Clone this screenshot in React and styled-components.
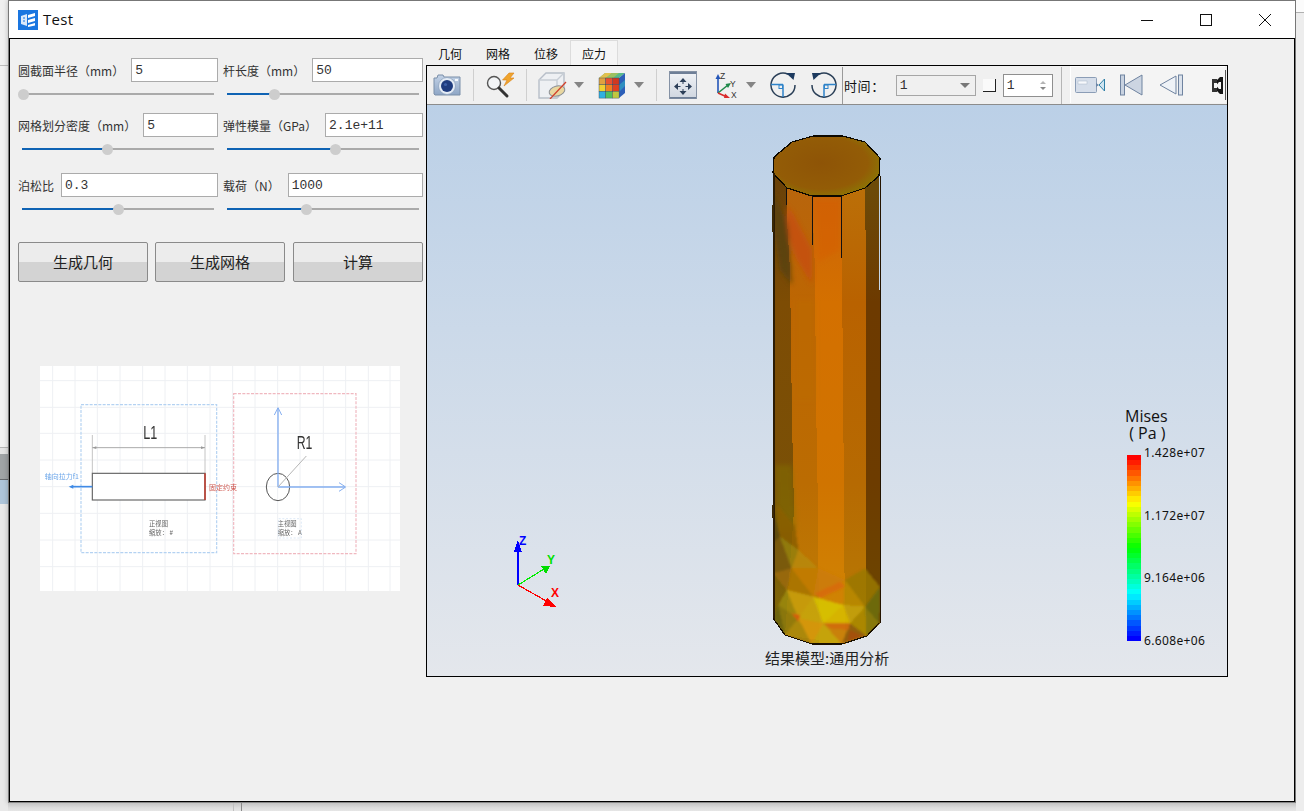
import React from 'react';
import styled, { createGlobalStyle } from 'styled-components';

const GlobalStyle = createGlobalStyle`
  html, body {
    margin: 0;
    padding: 0;
    background: #f0f0f0;
    overflow: hidden;
  }
  * { box-sizing: border-box; }
`;

const CJK = `"Noto Sans CJK SC", "Noto Sans", sans-serif`;

const Desktop = styled.div`
  width: 1304px;
  height: 811px;
  display: grid;
  grid-template-columns: 8px 1288px 8px;
  grid-template-rows: 803px 8px;
  background: #f0f0f0;
`;

const LeftStrip = styled.div`
  grid-row: 1 / 3;
  display: flex;
  flex-direction: column;
`;

const StripPart = styled.div`
  height: ${(p) => p.$h}px;
  flex: ${(p) => (p.$h ? 'none' : 1)};
  background: ${(p) => p.$c};
`;

const RightStrip = styled.div`
  grid-row: 1 / 3;
  grid-column: 3;
  display: flex;
  flex-direction: column;
`;

const BottomStrip = styled.div`
  grid-row: 2;
  grid-column: 2;
  display: flex;
  background: linear-gradient(#c4c4c4, #dedede 60%, #e6e6e6);
`;

const BottomLine = styled.div`
  width: 1px;
  margin-left: ${(p) => p.$ml}px;
  background: ${(p) => p.$c};
`;

const Win = styled.div`
  grid-row: 1;
  grid-column: 2;
  border: 1px solid #777;
  border-bottom-color: #888;
  background: #fff;
  display: flex;
  flex-direction: column;
  box-shadow: 0 0 5px rgba(0, 0, 0, 0.25);
`;

const TitleBar = styled.div`
  height: 37px;
  display: flex;
  align-items: center;
  padding-left: 9px;
`;

const TitleText = styled.span`
  margin-left: 5px;
  margin-top: -1px;
  font: 15px "Open Sans", "Noto Sans", sans-serif;
  letter-spacing: 0.3px;
  color: #111;
`;

const WinButtons = styled.div`
  margin-left: auto;
  display: flex;
  margin-right: 1px;
`;

const WinButton = styled.div`
  width: 58.7px;
  height: 37px;
  display: flex;
  align-items: center;
  justify-content: center;
`;

const Client = styled.div`
  flex: 1;
  display: flex;
  align-items: flex-start;
  background: #f0f0f0;
  border: 1px solid #000;
`;

const FormPanel = styled.div`
  width: 416px;
  padding: 19px 3px 0 8px;
`;

const FormRow = styled.div`
  display: grid;
  grid-template-columns: 200px 200px;
  column-gap: 5px;
  margin-bottom: ${(p) => p.$gap}px;
`;

const Cell = styled.div`
  display: flex;
  flex-direction: column;
`;

const FieldLine = styled.div`
  display: flex;
  align-items: center;
  height: 24px;
`;

const Label = styled.label`
  font: 12px ${CJK};
  color: #333;
  white-space: nowrap;
  margin-right: ${(p) => p.$mr}px;
`;

const TextBox = styled.div`
  flex: 1;
  height: 24px;
  background: #fff;
  border: 1px solid #ababab;
  padding-left: 3px;
  font: 13px/24px "Liberation Mono", monospace;
  color: #333;
`;

const SliderWrap = styled.div`
  position: relative;
  height: 16px;
  margin: 4px 4px 0 4px;
  display: flex;
  align-items: center;
  background: linear-gradient(#aaa, #aaa) center / 100% 2px no-repeat;
`;

const SliderFill = styled.div`
  height: 2px;
  width: ${(p) => p.$pos}px;
  background: #0f63b4;
`;

const SliderKnob = styled.div`
  position: absolute;
  top: 2.5px;
  left: ${(p) => p.$pos - 5.5}px;
  width: 11px;
  height: 11px;
  border-radius: 50%;
  background: #cdcdcd;
`;

const ButtonRow = styled.div`
  display: flex;
  gap: 7px;
`;

const ActionButton = styled.button`
  width: 130px;
  height: 40px;
  padding: 0 0 2px;
  border: 1px solid #8a8a8a;
  border-radius: 2px;
  background: linear-gradient(#ececec 50%, #d3d3d3 50%);
  font: 15px ${CJK};
  color: #222;
  &:last-child { margin-left: 1px; }
`;

const Sketch = styled.div`
  width: 360px;
  height: 225px;
  margin: 84px 0 0 22px;
  background: #fff;
  filter: blur(0.5px);
`;

const SketchSvg = styled.svg`
  display: block;
`;

const ResultColumn = styled.div`
  width: 802px;
  display: flex;
  flex-direction: column;
  margin-top: 1px;
`;

const TabBar = styled.div`
  height: 25px;
  display: flex;
`;

const Tab = styled.div`
  width: 48px;
  height: 25px;
  text-align: center;
  font: 12px/27px ${CJK};
  color: #111;
  ${(p) => p.$active && 'background: #f5f5f5; border: 1px solid #dcdcdc; border-bottom: 0; line-height: 25px;'}
`;

const Viewer = styled.div`
  height: 612px;
  border: 1px solid #000;
  display: flex;
  flex-direction: column;
`;

const Toolbar = styled.div`
  height: 39px;
  flex: none;
  display: flex;
  align-items: center;
  background: #f0f0f0;
  border-bottom: 1px solid #8c8c8c;
`;

const Tool = styled.div`
  flex: none;
  display: flex;
  margin-left: ${(p) => p.$ml || 0}px;
`;

const ToolSep = styled.div`
  flex: none;
  width: 1px;
  height: ${(p) => p.$h || 32}px;
  margin-left: ${(p) => p.$ml}px;
  background: ${(p) => p.$c || '#cfcfcf'};
`;

const Caret = styled.div`
  flex: none;
  margin-left: ${(p) => p.$ml}px;
  width: 0;
  height: 0;
  border-left: 5px solid transparent;
  border-right: 5px solid transparent;
  border-top: 6px solid #858585;
`;

const TimeLabel = styled.span`
  margin-left: 1px;
  font: 13px ${CJK};
  color: #111;
  letter-spacing: 0.6px;
  white-space: nowrap;
`;

const Combo = styled.div`
  flex: none;
  width: 80px;
  height: 21px;
  margin-left: 11px;
  border: 1px solid #a6a6a6;
  display: flex;
  align-items: center;
  justify-content: space-between;
  padding: 0 5px 0 3px;
  font: 13px "Liberation Mono", monospace;
  color: #333;
`;

const ComboCaret = styled.div`
  width: 0;
  height: 0;
  border-left: 5px solid transparent;
  border-right: 5px solid transparent;
  border-top: 5px solid #777;
`;

const ToggleBox = styled.div`
  flex: none;
  width: 13px;
  height: 13px;
  margin: 1px 0 0 7px;
  background: #fafafa;
  border-right: 1px solid #222;
  border-bottom: 1px solid #222;
`;

const Spin = styled.div`
  flex: none;
  width: 50px;
  height: 23px;
  margin-left: 7px;
  background: #fff;
  border: 1px solid #8f8f8f;
  display: flex;
  align-items: center;
  justify-content: space-between;
  padding: 0 6px 0 3px;
  font: 13px "Liberation Mono", monospace;
  color: #333;
`;

const SpinArrows = styled.div`
  display: flex;
  flex-direction: column;
  gap: 3px;
`;

const SpinArrow = styled.div`
  width: 0;
  height: 0;
  border-left: 3px solid transparent;
  border-right: 3px solid transparent;
  ${(p) => (p.$up ? 'border-bottom: 3px solid #b5b5b5;' : 'border-top: 3px solid #888;')}
`;

const PlayGroup = styled.div`
  flex: none;
  height: 37px;
  width: 155px;
  margin: 0 0 1px 8px;
  display: flex;
  align-items: center;
  background: #f4f4f4;
  border-top: 1px solid #fff;
  border-left: 1px solid #fff;
`;

const EdgeLine = styled.div`
  flex: none;
  width: 1px;
  height: 30px;
  background: #555;
`;

const Viewport = styled.div`
  position: relative;
  flex: 1;
  background: linear-gradient(#bbd0e7, #e4e7ec);
  overflow: hidden;
`;

const SceneSvg = styled.svg`
  position: absolute;
  left: 0;
  top: 0;
`;

const LegendTitle = styled.div`
  position: absolute;
  left: 698px;
  top: 303px;
  font: 16px/17px "Open Sans", "Noto Sans", sans-serif;
  color: #111;
  white-space: pre;
`;

const ColorBar = styled.div`
  position: absolute;
  left: 700px;
  top: 350px;
  width: 14px;
  height: 186px;
`;

const LegendValue = styled.div`
  position: absolute;
  left: 717px;
  top: ${(p) => p.$top}px;
  font: 12px/14px "Noto Sans", sans-serif;
  letter-spacing: 0.35px;
  color: #111;
`;

const ModelCaption = styled.div`
  position: absolute;
  left: 338px;
  top: 542px;
  font: 15px/22px ${CJK};
  color: #222;
  white-space: nowrap;
`;

// banded jet colour map for the legend, top (red) to bottom (blue)
const jet = (t) => {
  const stops = [
    [255, 0, 0],
    [255, 255, 0],
    [0, 255, 0],
    [0, 255, 255],
    [0, 0, 255],
  ];
  const s = Math.min(t * 4, 3.999);
  const i = Math.floor(s);
  const f = s - i;
  const c = stops[i].map((v, k) => Math.round(v + (stops[i + 1][k] - v) * f));
  return `rgb(${c.join(',')})`;
};

const BANDS = 36;
const barGradient = `linear-gradient(${Array.from({ length: BANDS }, (_, i) => {
  const a = ((i / BANDS) * 100).toFixed(2);
  const b = (((i + 1) / BANDS) * 100).toFixed(2);
  return `${jet(i / (BANDS - 1))} ${a}% ${b}%`;
}).join(',')})`;

const WindowLogo = () => (
  <svg width="20" height="20" viewBox="0 0 20 20">
    <rect width="20" height="20" fill="#1a76e0" />
    <path d="M3 6 L9 4 V16 L3 14 Z" fill="#dbe9fa" />
    <path d="M5 8h2M5 11h2" stroke="#1a76e0" strokeWidth="1.2" />
    <path d="M10 5 L17 3 V6 L10 8 Z M10 10 L17 8 V11 L10 13 Z M10 15 L17 13 V15.5 L10 17 Z" fill="#fff" />
  </svg>
);

const MinIcon = () => (
  <svg width="12" height="12" viewBox="0 0 12 12"><path d="M0 6.5H12" stroke="#111" fill="none" /></svg>
);
const MaxIcon = () => (
  <svg width="12" height="12" viewBox="0 0 12 12"><rect x="0.5" y="0.5" width="11" height="11" stroke="#111" fill="none" /></svg>
);
const CloseIcon = () => (
  <svg width="12" height="12" viewBox="0 0 12 12"><path d="M0 0L12 12M12 0L0 12" stroke="#111" fill="none" /></svg>
);

const CameraIcon = () => (
  <svg width="28" height="24" viewBox="0 0 28 24">
    <defs>
      <linearGradient id="camBody" x1="0" y1="0" x2="0" y2="1">
        <stop offset="0" stopColor="#c3d2e6" />
        <stop offset="1" stopColor="#8ea6c6" />
      </linearGradient>
    </defs>
    <path d="M1 5 H4 L5 2 H10 L11 4 H27 V22 H2 L1 21 Z" fill="url(#camBody)" stroke="#7b8fa9" />
    <circle cx="14" cy="13" r="8.5" fill="#e4ecf6" stroke="#8ea2bd" strokeWidth="0.8" />
    <circle cx="14" cy="13" r="6" fill="#1f3c7f" />
    <circle cx="12.5" cy="11.5" r="1.6" fill="#3d60a8" />
    <rect x="22" y="6" width="3" height="2" fill="#f4f8fc" />
  </svg>
);

const ZoomBoltIcon = () => (
  <svg width="30" height="27" viewBox="0 0 30 27">
    <circle cx="8" cy="11" r="6.5" fill="#f2f4f6" stroke="#555" strokeWidth="1.4" />
    <path d="M13 16L21 24" stroke="#333" strokeWidth="3" strokeLinecap="round" />
    <path d="M23 1 L16.5 8 L21 8 L18 14 L28 6 L24 6 L28 1 Z" fill="#f0a42c" stroke="#d9821a" strokeWidth="0.6" />
  </svg>
);

const SectionBoxIcon = () => (
  <svg width="30" height="28" viewBox="0 0 30 28">
    <path d="M2 9 L9 2 H27 V20 L20 27 H2 Z" fill="#eef0f3" stroke="#b7bec8" strokeWidth="1.4" />
    <path d="M2 9 H20 V27 M20 9 L27 2" fill="none" stroke="#c7cdd5" strokeWidth="1.4" />
    <ellipse cx="20" cy="20" rx="8" ry="5" fill="#e9d7a0" stroke="#8a8f96" transform="rotate(-15 20 20)" />
    <path d="M13 28 L29 11" stroke="#d1412c" strokeWidth="1.3" />
  </svg>
);

const ColorCubeIcon = () => {
  const front = [
    ['#e0a040', '#e85030', '#d03820'],
    ['#f0d030', '#f08020', '#e04020'],
    ['#30b0e0', '#50c060', '#c0c840'],
  ];
  return (
    <svg width="28" height="27" viewBox="0 0 28 27">
      <path d="M1 6 L7 1 H27 L21 6 Z" fill="#58b88a" />
      <path d="M7 1 H14 L8 6 H1 Z" fill="#e2c14e" />
      <path d="M14 1 H21 L15 6 H8 Z" fill="#9cc060" />
      <path d="M21 6 L27 1 V21 L21 26 Z" fill="#2c5fb8" />
      <path d="M21 13 L27 8 V14 L21 20 Z" fill="#2f8fc0" />
      {front.map((row, r) =>
        row.map((c, k) => (
          <rect key={`${r}-${k}`} x={1 + k * 6.7} y={6 + r * 6.7} width="6.7" height="6.7" fill={c} stroke="#31465f" strokeWidth="0.4" />
        ))
      )}
    </svg>
  );
};

const FitIcon = () => (
  <svg width="28" height="28" viewBox="0 0 28 28">
    <defs>
      <linearGradient id="fitBody" x1="0" y1="0" x2="0" y2="1">
        <stop offset="0" stopColor="#f2f4f7" />
        <stop offset="1" stopColor="#cfd6e0" />
      </linearGradient>
    </defs>
    <rect x="0.5" y="0.5" width="27" height="27" fill="url(#fitBody)" stroke="#8592a5" />
    <rect x="1" y="1" width="26" height="2" fill="#6e7f97" />
    <rect x="1" y="26" width="26" height="1.5" fill="#6e7f97" />
    <path d="M14 7L10.5 11H17.5ZM14 24L10.5 20H17.5ZM5 15.5L9 12V19ZM23 15.5L19 12V19Z" fill="#2c3f58" />
    <path d="M14 11V13M14 18V20M9 15.5H11.5M16.5 15.5H19" stroke="#2c3f58" />
  </svg>
);

const AxesIcon = () => (
  <svg width="30" height="27" viewBox="0 0 30 27">
    <path d="M5 21V6" stroke="#2456b8" strokeWidth="1.6" />
    <path d="M5 2L2.5 7H7.5Z" fill="#2456b8" />
    <path d="M5 21L15 13" stroke="#20894a" strokeWidth="1.6" />
    <path d="M18 11L12.5 12L15 16Z" fill="#20894a" />
    <path d="M5 21L14 25" stroke="#d92b2b" strokeWidth="1.6" />
    <path d="M17 26L12 21.5L11 26Z" fill="#d92b2b" />
    <text x="7" y="7" fontFamily="Liberation Sans, sans-serif" fontSize="8.5" fill="#333">Z</text>
    <text x="17" y="15" fontFamily="Liberation Sans, sans-serif" fontSize="8.5" fill="#333">Y</text>
    <text x="18" y="26" fontFamily="Liberation Sans, sans-serif" fontSize="8.5" fill="#333">X</text>
  </svg>
);

const FlipBox = styled.svg`
  display: block;
  ${(p) => p.$flip && 'transform: scaleX(-1);'}
`;

const RotateIcon = ({ flip }) => (
  <FlipBox $flip={flip} width="26" height="26" viewBox="0 0 26 26">
    <path d="M18 2.2 A 12 12 0 1 0 25 13" fill="none" stroke="#2a3f57" strokeWidth="1.5" />
    <path d="M16 1 L25 1 L23.5 8 Z" fill="#1d3a5f" />
    <path d="M13 12.5 V25 M1 12.5 H13" stroke="#2f83c9" strokeWidth="1.5" fill="none" />
    <rect x="9" y="13" width="3.5" height="3.5" fill="none" stroke="#2f83c9" />
  </FlipBox>
);

const MovieCamIcon = () => (
  <svg width="30" height="18" viewBox="0 0 30 18">
    <rect x="0.5" y="1.5" width="21" height="15" rx="1" fill="#d6deea" stroke="#8b9db6" />
    <rect x="3" y="5" width="9" height="3" fill="#f7f9fc" stroke="#a9b6c8" strokeWidth="0.5" />
    <path d="M21 7 L24 9 L21 11 Z" fill="#6b86a8" />
    <path d="M24 9 L29.5 3 V15 Z" fill="#cfe4f0" stroke="#2e7fa6" />
  </svg>
);

const FirstFrameIcon = () => (
  <svg width="23" height="22" viewBox="0 0 23 22">
    <rect x="0.5" y="1" width="4" height="20" fill="#c8d2e0" stroke="#6f83a0" />
    <path d="M5 11 L22 1 V21 Z" fill="#ccd5e2" stroke="#6f83a0" />
  </svg>
);

const PrevFrameIcon = () => (
  <svg width="24" height="22" viewBox="0 0 24 22">
    <path d="M1 11 L17 2 V20 Z" fill="#eef2f7" stroke="#6f83a0" />
    <rect x="19.5" y="1" width="4" height="20" fill="#dbe2ec" stroke="#6f83a0" />
  </svg>
);

const CutIcon = () => (
  <svg width="11" height="17" viewBox="0 0 11 17">
    <rect x="5" width="6" height="17" fill="#151515" />
    <path d="M0 2H5V6H2V11H5V15H0Z" fill="#333" />
    <path d="M7 5L4 8.5L7 12H9V5Z" fill="#f4f4f4" />
    <path d="M5 0H8L5 3ZM5 17H8L5 14Z" fill="#f4f4f4" />
  </svg>
);

const gridX = [68, 135, 202, 270, 338, 405, 472, 540, 608, 675, 743, 810, 880, 947, 1015, 1080];
const gridY = [62, 142, 220, 300, 380, 460, 540, 620];

// points below are in 3x units, the sketch was traced from an enlarged view
const BeamSketch = () => (
  <SketchSvg width="360" height="225" viewBox="30 18 1080 675">
    {gridX.map((x) => <path key={x} d={`M${x} 18V693`} stroke="#eef0f3" strokeWidth="3" />)}
    {gridY.map((y) => <path key={y} d={`M30 ${y}H1110`} stroke="#eef0f3" strokeWidth="3" />)}
    <rect x="153" y="134" width="407" height="444" fill="none" stroke="#b4d2f2" strokeWidth="3.5" strokeDasharray="9 4" />
    <rect x="611" y="101" width="367" height="480" fill="none" stroke="#f0b8c0" strokeWidth="3.5" strokeDasharray="9 4" />
    <path d="M187 225V340M525 225V340" stroke="#c4c4c4" strokeWidth="3" />
    <path d="M187 263H525" stroke="#aaa" strokeWidth="3" />
    <path d="M187 263l12 -4v8zM525 263l-12 -4v8z" fill="#999" />
    <text x="340" y="238" fontFamily="Liberation Sans, sans-serif" fontSize="54" fill="#333" textLength="42" lengthAdjust="spacingAndGlyphs">L1</text>
    <rect x="187" y="340" width="338" height="80" fill="#fff" stroke="#666" strokeWidth="3.5" />
    <path d="M525 340V420" stroke="#c0392b" strokeWidth="4.5" />
    <path d="M187 380H128" stroke="#3f8ae6" strokeWidth="5" />
    <path d="M116 380l14 -6v12z" fill="#3f8ae6" />
    <text x="44" y="356" fontFamily={CJK} fontSize="21" fill="#6ba6ea">轴向拉力f1</text>
    <text x="537" y="391" fontFamily={CJK} fontSize="21" fill="#cf5a52">固定约束</text>
    <text x="357" y="498" fontFamily={CJK} fontSize="19" fill="#666">正视图</text>
    <text x="357" y="526" fontFamily={CJK} fontSize="19" fill="#666">缩放： #</text>
    <text x="743" y="498" fontFamily={CJK} fontSize="19" fill="#666">主视图</text>
    <text x="743" y="526" fontFamily={CJK} fontSize="19" fill="#666">缩放： A</text>
    <rect x="746" y="476" width="68" height="58" fill="none" stroke="#cfe0f3" strokeWidth="2" strokeDasharray="6 5" />
    <ellipse cx="744" cy="381" rx="35" ry="41" fill="none" stroke="#555" strokeWidth="3" />
    <path d="M744 381V145M744 381H945" stroke="#84aef0" strokeWidth="4" fill="none" />
    <path d="M733 165L744 143L755 165M927 368L947 381L927 394" stroke="#84aef0" strokeWidth="3" fill="none" />
    <path d="M744 381L829 288" stroke="#b5b5b5" strokeWidth="3" />
    <text x="800" y="268" fontFamily="Liberation Sans, sans-serif" fontSize="54" fill="#333" textLength="47" lengthAdjust="spacingAndGlyphs">R1</text>
  </SketchSvg>
);

const SILHOUETTE = '774,173 787,188 812,196 841,196 865,188 879,176 880,623 867,636 842,644 812,644 785,635 773,618';

const sideFaces = [
  { id: 'f1', points: '774,173 787,188 787,220 790,270 792,420 794,510 800,560 785,635 773,618', stops: ['#6b4208', '#7d4c04', '#7a5006', '#806a08'] },
  { id: 'f2', points: '787,188 812,196 815,270 816,400 818,510 819,640 785,635 794,510 792,420 790,270 787,220', stops: ['#b8650c', '#bd6602', '#bb6c02', '#bf8004'] },
  { id: 'f3', points: '812,196 841,196 842,270 844,500 845,644 819,644 818,510 816,400 815,270', stops: ['#cc6508', '#d47000', '#d07400', '#d08804'] },
  { id: 'f4', points: '841,196 865,188 866,270 866,636 845,644 844,500 842,270', stops: ['#bb6f08', '#b96200', '#b66a02', '#b87c04'] },
  { id: 'f5', points: '865,188 879,176 881,623 866,636 866,270', stops: ['#6c4a08', '#6d3a00', '#6d3c00', '#6d4800'] },
];

// lower mesh triangles, in 3x units from (750,490)
const meshTris = [
  ['70,385 110,300 85,345', '#8c7008'],
  ['70,250 125,235 110,300', '#9c6a08'],
  ['70,160 90,140 125,235 70,250', '#7a5a08'],
  ['90,140 145,180 125,235', '#948008'],
  ['70,60 90,140 70,160', '#5c4a08'],
  ['80,40 135,110 145,180 90,140', '#8a5e06'],
  ['145,180 205,235 125,235', '#b88a0a'],
  ['125,235 205,235 190,320', '#c27c06'],
  ['125,235 190,320 110,300', '#a87406'],
  ['205,235 285,270 190,320', '#cc7c08'],
  ['285,270 345,350 280,345', '#b88a06'],
  ['190,320 280,345 220,400', '#d8c804'],
  ['110,300 190,320 145,385', '#c8a00a'],
  ['190,320 220,400 145,385', '#c8a808'],
  ['110,300 85,345 145,385', '#9c8a0c'],
  ['85,345 70,385 105,435', '#6a6408'],
  ['85,345 145,385 105,435', '#8c7a08'],
  ['145,385 220,400 185,462', '#d89a08'],
  ['105,435 145,385 185,462', '#a88a0a'],
  ['220,400 275,462 185,462', '#c4a808'],
  ['220,400 300,400 275,462', '#c88008'],
  ['220,400 280,345 300,400', '#d8bc06'],
  ['280,345 345,350 300,400', '#c4a408'],
  ['300,400 345,350 350,437', '#a88a06'],
  ['300,400 350,437 275,462', '#8c5c08'],
  ['345,350 388,400 350,437', '#8c8208'],
  ['345,350 390,290 388,400', '#6e7008'],
  ['285,270 345,235 390,290 345,350', '#9a7806'],
  ['125,370 152,375 145,395', '#d85a08'],
  ['225,400 300,398 295,420 240,415', '#d06a08'],
  ['195,310 270,275 285,290 210,325', '#d86a08'],
  ['290,455 340,440 300,420', '#a04a08'],
];

// soft colour patches on the upper part of the shaft
const softPatches = [
  { points: '787,205 794,215 812,250 812,285 796,258 787,232', color: '#c8480a', o: 0.7 },
  { points: '815,200 840,200 840,250 818,262', color: '#d85a04', o: 0.45 },
  { points: '773,192 788,226 792,285 780,270 773,225', color: '#54400a', o: 0.75 },
  { points: '795,300 815,300 815,400 795,400', color: '#bb6a04', o: 0.35 },
  { points: '775,465 792,465 796,530 777,530', color: '#84700a', o: 0.5 },
];

const CylinderScene = () => (
  <SceneSvg width="800" height="571" viewBox="427 105 800 571" shapeRendering="crispEdges">
    <defs>
      {sideFaces.map((f) => (
        <linearGradient key={f.id} id={f.id} gradientUnits="userSpaceOnUse" x1="0" y1="190" x2="0" y2="640">
          <stop offset="0" stopColor={f.stops[0]} />
          <stop offset="0.25" stopColor={f.stops[1]} />
          <stop offset="0.65" stopColor={f.stops[2]} />
          <stop offset="1" stopColor={f.stops[3]} />
        </linearGradient>
      ))}
      <radialGradient id="capFill" cx="0.45" cy="0.45" r="0.62">
        <stop offset="0" stopColor="#8e5406" />
        <stop offset="0.7" stopColor="#935c06" />
        <stop offset="1" stopColor="#8a7a04" />
      </radialGradient>
      <clipPath id="bodyClip"><polygon points={SILHOUETTE} /></clipPath>
      <filter id="meshSoft" x="-10%" y="-10%" width="120%" height="120%">
        <feGaussianBlur stdDeviation="3" />
      </filter>
      <filter id="patchSoft" x="-40%" y="-40%" width="180%" height="180%">
        <feGaussianBlur stdDeviation="2.5" />
      </filter>
    </defs>

    <polygon points={SILHOUETTE} fill="#9a5a06" />
    {sideFaces.map((f) => <polygon key={f.id} points={f.points} fill={`url(#${f.id})`} />)}

    <g clipPath="url(#bodyClip)">
      <g filter="url(#patchSoft)">
        {softPatches.map((s) => <polygon key={s.points} points={s.points} fill={s.color} opacity={s.o} />)}
      </g>
      <g filter="url(#meshSoft)" opacity="0.85" transform="translate(750 490) scale(0.3333)">
        {meshTris.map(([pts, c]) => <polygon key={pts} points={pts} fill={c} />)}
      </g>
    </g>

    <polygon
      points="774,157 792,142 813,136 843,136 865,142 880,158 879,176 865,188 841,196 812,196 787,188 773,173"
      fill="url(#capFill)"
      stroke="#0c0800"
      strokeWidth="1.2"
    />
    <path d="M786.5 188V205M812.5 196V245M841.5 196V258" stroke="#111" strokeWidth="1" fill="none" />
    <path d="M774 173V620" stroke="#2c1c04" strokeWidth="1.6" fill="none" />
    <path d="M772.5 205V232M772.5 505V518" stroke="#3a2806" strokeWidth="2" fill="none" />
    <path d="M880.5 176V623" stroke="#241400" strokeWidth="1" fill="none" />
    <path d="M773 618L785 635L812 644L842 644L867 636L879 623" stroke="#1a1000" strokeWidth="1.2" fill="none" />

    {/* triad */}
    <path d="M518 585V549" stroke="#0000ff" strokeWidth="1.4" />
    <path d="M518 540L514 552H522Z" fill="#0000ff" />
    <path d="M518 585L544 569" stroke="#00ee00" strokeWidth="1.2" />
    <path d="M550 566L541 566L546 574Z" fill="#00dd00" />
    <path d="M518 585L548 602" stroke="#ff0000" strokeWidth="1.2" />
    <path d="M556 607L547 598L543 606Z" fill="#ff0000" />
    <text x="519" y="545" fontFamily="Liberation Sans, sans-serif" fontWeight="700" fontSize="12" fill="#0000ff">Z</text>
    <text x="547" y="564" fontFamily="Liberation Sans, sans-serif" fontWeight="700" fontSize="12" fill="#00e000">Y</text>
    <text x="551" y="597" fontFamily="Liberation Sans, sans-serif" fontWeight="700" fontSize="12" fill="#ff0000">X</text>
  </SceneSvg>
);

const Slider = ({ pos }) => (
  <SliderWrap>
    <SliderFill $pos={pos} />
    <SliderKnob $pos={pos} />
  </SliderWrap>
);

const Field = ({ label, value, gap, pos }) => (
  <Cell>
    <FieldLine>
      <Label $mr={gap}>{label}</Label>
      <TextBox>{value}</TextBox>
    </FieldLine>
    <Slider pos={pos} />
  </Cell>
);

const leftStrip = [
  [65, '#f0f0f0'], [1, '#bdbdbd'], [381, '#f1f1f1'], [1, '#b5b5b5'], [6, '#e4e4e4'],
  [25, '#a0a4a6'], [1, '#666a6e'], [24, '#aec5da'], [0, '#e9e9e9'],
];

const rightStrip = [[12, '#fbfbfb'], [1, '#b0b0b0'], [0, '#ededed']];

export default function App() {
  return (
    <>
      <GlobalStyle />
      <Desktop>
        <LeftStrip>
          {leftStrip.map(([h, c], i) => <StripPart key={i} $h={h} $c={c} />)}
        </LeftStrip>
        <Win>
          <TitleBar>
            <WindowLogo />
            <TitleText>Test</TitleText>
            <WinButtons>
              <WinButton><MinIcon /></WinButton>
              <WinButton><MaxIcon /></WinButton>
              <WinButton><CloseIcon /></WinButton>
            </WinButtons>
          </TitleBar>
          <Client>
            <FormPanel>
              <FormRow $gap={11}>
                <Field label="圆截面半径（mm）" value="5" gap={7} pos={1} />
                <Field label="杆长度（mm）" value="50" gap={7} pos={47} />
              </FormRow>
              <FormRow $gap={16}>
                <Field label="网格划分密度（mm）" value="5" gap={7} pos={85} />
                <Field label="弹性模量（GPa）" value="2.1e+11" gap={8} pos={108} />
              </FormRow>
              <FormRow $gap={25}>
                <Field label="泊松比" value="0.3" gap={7} pos={96} />
                <Field label="载荷（N）" value="1000" gap={8} pos={79} />
              </FormRow>
              <ButtonRow>
                <ActionButton>生成几何</ActionButton>
                <ActionButton>生成网格</ActionButton>
                <ActionButton>计算</ActionButton>
              </ButtonRow>
              <Sketch><BeamSketch /></Sketch>
            </FormPanel>
            <ResultColumn>
              <TabBar>
                <Tab>几何</Tab>
                <Tab>网格</Tab>
                <Tab>位移</Tab>
                <Tab $active>应力</Tab>
              </TabBar>
              <Viewer>
                <Toolbar>
                  <Tool $ml={6}><CameraIcon /></Tool>
                  <ToolSep $ml={12} />
                  <Tool $ml={12}><ZoomBoltIcon /></Tool>
                  <ToolSep $ml={10} />
                  <Tool $ml={10}><SectionBoxIcon /></Tool>
                  <Caret $ml={7} />
                  <Tool $ml={14}><ColorCubeIcon /></Tool>
                  <Caret $ml={8} />
                  <ToolSep $ml={12} />
                  <Tool $ml={12}><FitIcon /></Tool>
                  <Tool $ml={16}><AxesIcon /></Tool>
                  <Caret $ml={3} />
                  <Tool $ml={14}><RotateIcon /></Tool>
                  <Tool $ml={15}><RotateIcon flip /></Tool>
                  <ToolSep $ml={5} $h={37} $c="#9a9a9a" />
                  <TimeLabel>时间：</TimeLabel>
                  <Combo>1<ComboCaret /></Combo>
                  <ToggleBox />
                  <Spin>
                    1
                    <SpinArrows><SpinArrow $up /><SpinArrow /></SpinArrows>
                  </Spin>
                  <ToolSep $ml={8} $h={37} $c="#b5b5b5" />
                  <PlayGroup>
                    <Tool $ml={4}><MovieCamIcon /></Tool>
                    <Tool $ml={15}><FirstFrameIcon /></Tool>
                    <Tool $ml={16}><PrevFrameIcon /></Tool>
                    <Tool $ml={29}><CutIcon /></Tool>
                  </PlayGroup>
                  <EdgeLine />
                </Toolbar>
                <Viewport>
                  <CylinderScene />
                  <LegendTitle>{'Mises\n ( Pa )'}</LegendTitle>
                  <ColorBar style={{ background: barGradient }} />
                  <LegendValue $top={341}>1.428e+07</LegendValue>
                  <LegendValue $top={404}>1.172e+07</LegendValue>
                  <LegendValue $top={466}>9.164e+06</LegendValue>
                  <LegendValue $top={529}>6.608e+06</LegendValue>
                  <ModelCaption>结果模型:通用分析</ModelCaption>
                </Viewport>
              </Viewer>
            </ResultColumn>
          </Client>
        </Win>
        <RightStrip>
          {rightStrip.map(([h, c], i) => <StripPart key={i} $h={h} $c={c} />)}
        </RightStrip>
        <BottomStrip>
          <BottomLine $ml={225} $c="#c0c0c0" />
          <BottomLine $ml={7} $c="#8a8a8a" />
        </BottomStrip>
      </Desktop>
    </>
  );
}
